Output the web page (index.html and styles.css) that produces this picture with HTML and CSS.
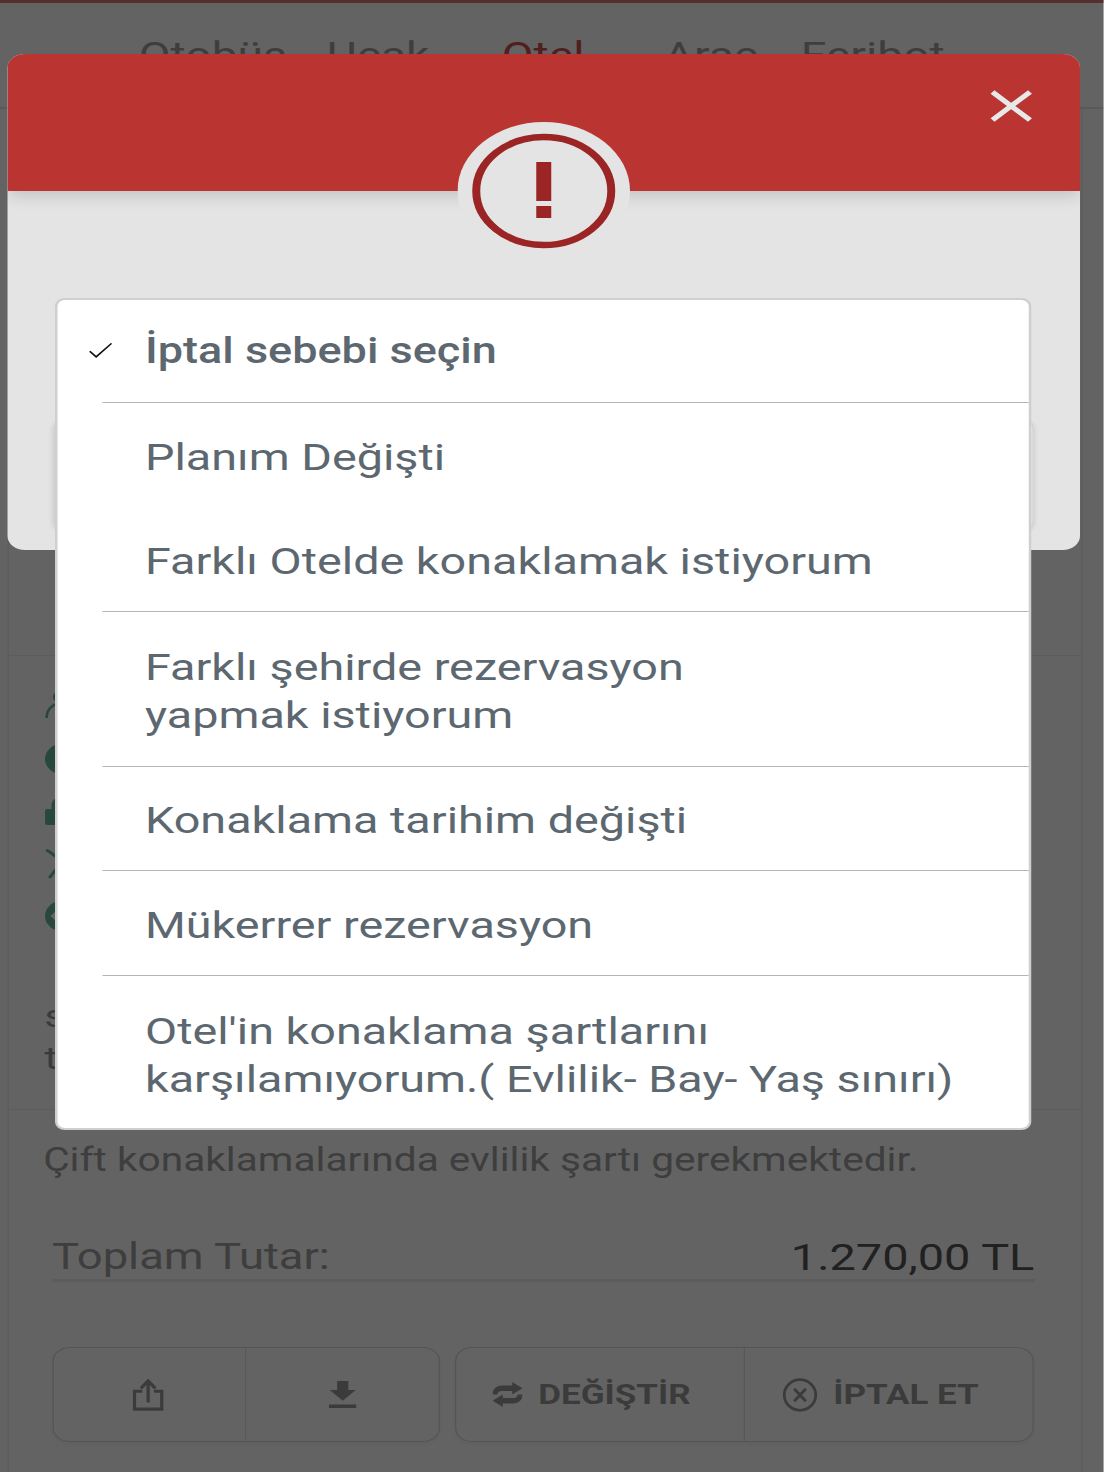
FILE: index.html
```html
<!DOCTYPE html>
<html lang="tr">
<head>
<meta charset="utf-8">
<title>İptal sebebi</title>
<link rel="stylesheet" href="styles.css">
</head>
<body>
<div class="stage">
  <div class="page">
    <header class="topbar">
      <nav class="tabs">
        <span>Otobüs</span><span>Uçak</span><span class="tab-active">Otel</span><span>Araç</span><span>Feribot</span>
      </nav>
    </header>
    <main class="card">
      <section class="summary"></section>
      <section class="details">
        <ul class="features">
          <li><svg viewBox="0 0 30 30" preserveAspectRatio="none"><circle cx="13" cy="6" r="4.5" fill="none" stroke="currentColor" stroke-width="2.5"/><path d="M1.500 27c0-8 5-14 11.500-14s11 6 11 14" fill="none" stroke="currentColor" stroke-width="2.5"/></svg></li>
          <li><svg viewBox="0 0 30 30" preserveAspectRatio="none"><circle cx="15" cy="15" r="15" fill="currentColor"/></svg></li>
          <li><svg viewBox="0 0 30 30" preserveAspectRatio="none"><path d="M6 13V8a8 8 0 0 1 8-7h6v4h-6a4 4 0 0 0-4 3v5z" fill="currentColor"/><rect x="0" y="13" width="28" height="16" rx="2" fill="currentColor"/></svg></li>
          <li><svg viewBox="0 0 30 30" preserveAspectRatio="none"><path d="M1 1c8 4 18 16 26 28M4 29C10 20 18 10 28 1" fill="none" stroke="currentColor" stroke-width="3"/></svg></li>
          <li><svg viewBox="0 0 30 30" preserveAspectRatio="none"><circle cx="15" cy="15" r="15" fill="currentColor"/><path d="M5 15l5-5v10z" fill="#fff"/></svg></li>
        </ul>
        <p class="note">s</p>
        <p class="note">t</p>
      </section>
      <section class="pricing">
        <p class="condition">Çift konaklamalarında evlilik şartı gerekmektedir.</p>
        <div class="total"><span>Toplam Tutar:</span><span class="amount">1.270,00 TL</span></div>
        <div class="actions">
          <div class="group group-small">
            <button class="cell">
              <svg class="icon-share" viewBox="0 0 32 34" preserveAspectRatio="none"><path d="M10 13H2v19h28V13h-8M16 25V3M8.500 10L16 2l7.500 8" fill="none" stroke="currentColor" stroke-width="3.400"/></svg>
            </button>
            <button class="cell">
              <svg class="icon-down" viewBox="0 0 30 30" preserveAspectRatio="none"><path d="M9 0h12v10h8L15 22 1 10h8zM0 26h30v4H0z" fill="currentColor"/></svg>
            </button>
          </div>
          <div class="group group-large">
            <button class="cell cell-label">
              <svg class="icon-swap" viewBox="0 0 32 28" preserveAspectRatio="none"><path d="M21 0l11 7-11 7v-4H10c-3 0-4 1-5 4H0c0-6 4-10 10-10h11zM11 28L0 21l11-7v4h11c3 0 4-1 5-4h5c0 6-4 10-10 10H11z" fill="currentColor"/></svg>
              <span>DEĞİŞTİR</span>
            </button>
            <button class="cell cell-label">
              <svg class="icon-cancel" viewBox="0 0 30 30" preserveAspectRatio="none"><circle cx="15" cy="15" r="13.500" fill="none" stroke="currentColor" stroke-width="2.400"/><path d="M10 9.500l10 11M20 9.500l-10 11" fill="none" stroke="currentColor" stroke-width="2.400"/></svg>
              <span>İPTAL ET</span>
            </button>
          </div>
        </div>
      </section>
    </main>
  </div>

  <div class="overlay"></div>

  <div class="modal">
    <div class="modal-head">
      <svg class="close" viewBox="0 0 34 32"><path d="M2 2l30 28M32 2L2 30" fill="none" stroke="#e8e8e8" stroke-width="4.6"/></svg>
    </div>
    <div class="modal-body">
      <div class="select-box"></div>
    </div>
    <div class="badge">
      <svg viewBox="0 0 138 138"><circle cx="69" cy="69" r="69" fill="#e4e4e4"/><circle cx="69" cy="69" r="54" fill="none" stroke="#9a2524" stroke-width="6.4"/><rect x="63" y="40" width="12" height="39" fill="#9a2524"/><rect x="63" y="84" width="12" height="12" fill="#9a2524"/></svg>
    </div>
  </div>

  <ul class="picker">
    <li class="option option-selected">
      <svg class="check" viewBox="0 0 24 20"><path d="M1 11l6.500 7L23 1" fill="none" stroke="#111" stroke-width="1.800"/></svg>
      <div class="option-text">İptal sebebi seçin</div>
    </li>
    <li class="option"><div class="option-text option-plain">Planım Değişti</div></li>
    <li class="option"><div class="option-text">Farklı Otelde konaklamak istiyorum</div></li>
    <li class="option"><div class="option-text option-tall">Farklı şehirde rezervasyon<br>yapmak istiyorum</div></li>
    <li class="option"><div class="option-text option-short">Konaklama tarihim değişti</div></li>
    <li class="option"><div class="option-text">Mükerrer rezervasyon</div></li>
    <li class="option"><div class="option-text option-plain option-last">Otel'in konaklama şartlarını<br>karşılamıyorum.( Evlilik- Bay- Yaş sınırı)</div></li>
  </ul>
</div>
</body>
</html>
```
FILE: styles.css
```css
* { box-sizing: border-box; }
html, body { margin: 0; height: 1472px; overflow: hidden; background: #fff; }
body { font-family: Roboto, "Liberation Sans", Arial, sans-serif; }
ul { list-style: none; margin: 0; padding: 0; }
p { margin: 0; }

.stage {
  position: relative;
  width: 883.2px;
  height: 1472px;
  overflow: hidden;
  transform: scaleX(1.25);
  transform-origin: 0 0;
}

.page { height: 1472px; display: flex; flex-direction: column; }
.topbar {
  height: 109px;
  border-top: 3px solid #dc7878;
  border-bottom: 2px solid #e6e6e6;
  padding: 33px 0 0 111px;
}
.tabs {
  display: grid;
  grid-template-columns: 150.4px 140px 129.6px 109.6px auto;
  font-size: 37px;
  line-height: 40px;
  color: #a0a0a0;
}
.tab-active { color: #d05050; }

.card {
  flex: 1;
  margin: 0 17.500px 0 6px;
  border-left: 1px solid #ececec;
  border-right: 1px solid #ececec;
  display: flex;
  flex-direction: column;
}
.summary { height: 547px; border-bottom: 1px solid #ececec; }
.details { height: 454px; padding: 24px 0 0 28.500px; border-bottom: 1px solid #ececec; }
.features { color: #6ab99b; }
.features li { height: 52.500px; display: flex; align-items: center; }
.features svg { width: 26px; height: 30px; }
.note { font-size: 32px; line-height: 42px; color: #999; }
.features + .note { margin-top: 52px; }

.pricing { flex: 1; padding: 28px 0 0 0; }
.condition { font-size: 32.500px; line-height: 44px; color: #a0a0a0; padding-left: 27.500px; white-space: nowrap; }
.total {
  display: flex;
  justify-content: space-between;
  margin: 50px 0 0 34.500px;
  width: 786px;
  height: 50px;
  font-size: 36.300px;
  line-height: 50px;
  color: #a0a0a0;
  border-bottom: 3px solid #ececec;
}
.amount { color: #555; font-size: 37.500px; }
.actions { display: flex; gap: 12px; margin: 65px 0 0 34.500px; width: 786px; }
.group {
  height: 95px;
  display: flex;
  border: 1px solid #d8d8d8;
  border-radius: 14px;
  box-shadow: 0 2px 4px rgba(0,0,0,.05);
}
.group-small { width: 310.400px; }
.group-large { width: 463.600px; }
.cell {
  flex: 1;
  display: flex;
  align-items: center;
  justify-content: center;
  background: none;
  border: 0;
  font: inherit;
  color: #999;
  padding: 0;
}
.cell + .cell { border-left: 1px solid #e2e2e2; }
.cell-label { gap: 13px; padding-right: 14px; font-size: 28px; font-weight: 700; }
.icon-share { width: 25px; height: 32px; margin-right: 2px; }
.icon-down { width: 22.400px; height: 27px; }
.icon-swap { width: 24px; height: 25px; }
.icon-cancel { width: 28px; height: 34px; }

.overlay { position: absolute; inset: 0; background: rgba(0,0,0,.61); }

.modal {
  position: absolute;
  left: 5.600px;
  top: 54px;
  width: 858.400px;
  height: 496px;
  border-radius: 14px;
  background: #e4e4e4;
  overflow: hidden;
}
.modal-head {
  height: 137px;
  background: #ba3531;
  box-shadow: 0 4px 14px rgba(0,0,0,.16);
  position: relative;
  display: flex;
  justify-content: flex-end;
  padding: 35px 38px 0 0;
}
.close { width: 34px; height: 34px; }
.modal-body { padding: 229px 37px 0 37px; }
.select-box { height: 110px; border: 1px solid #d0d0d0; border-radius: 8px; box-shadow: 0 1px 5px rgba(0,0,0,.12); }
.badge { position: absolute; left: 360.600px; top: 68px; width: 138px; height: 138px; }
.badge svg { display: block; width: 138px; height: 138px; }

.picker {
  position: absolute;
  left: 44px;
  top: 298px;
  width: 781.200px;
  height: 832px;
  background: #fff;
  border: 2.500px solid #cfcfcf;
  border-radius: 8px;
  color: #5c6770;
  font-size: 37.400px;
  line-height: 48px;
}
.option { position: relative; padding-left: 36px; }
.option-text {
  padding: 30px 0 26px 34px;
  border-bottom: 1px solid #b5b5b5;
}
.option-plain { border-bottom: 0; }
.option-selected .option-text { font-size: 36px; font-weight: 500; padding: 27px 0 27px 34px; }
.option-tall { padding: 31px 0 27px 34px; }
.option-short { padding: 29px 0 26px 34px; }
.option-last { padding-top: 31px; }
.check { position: absolute; left: 25px; top: 41px; width: 19px; height: 19px; }
```
